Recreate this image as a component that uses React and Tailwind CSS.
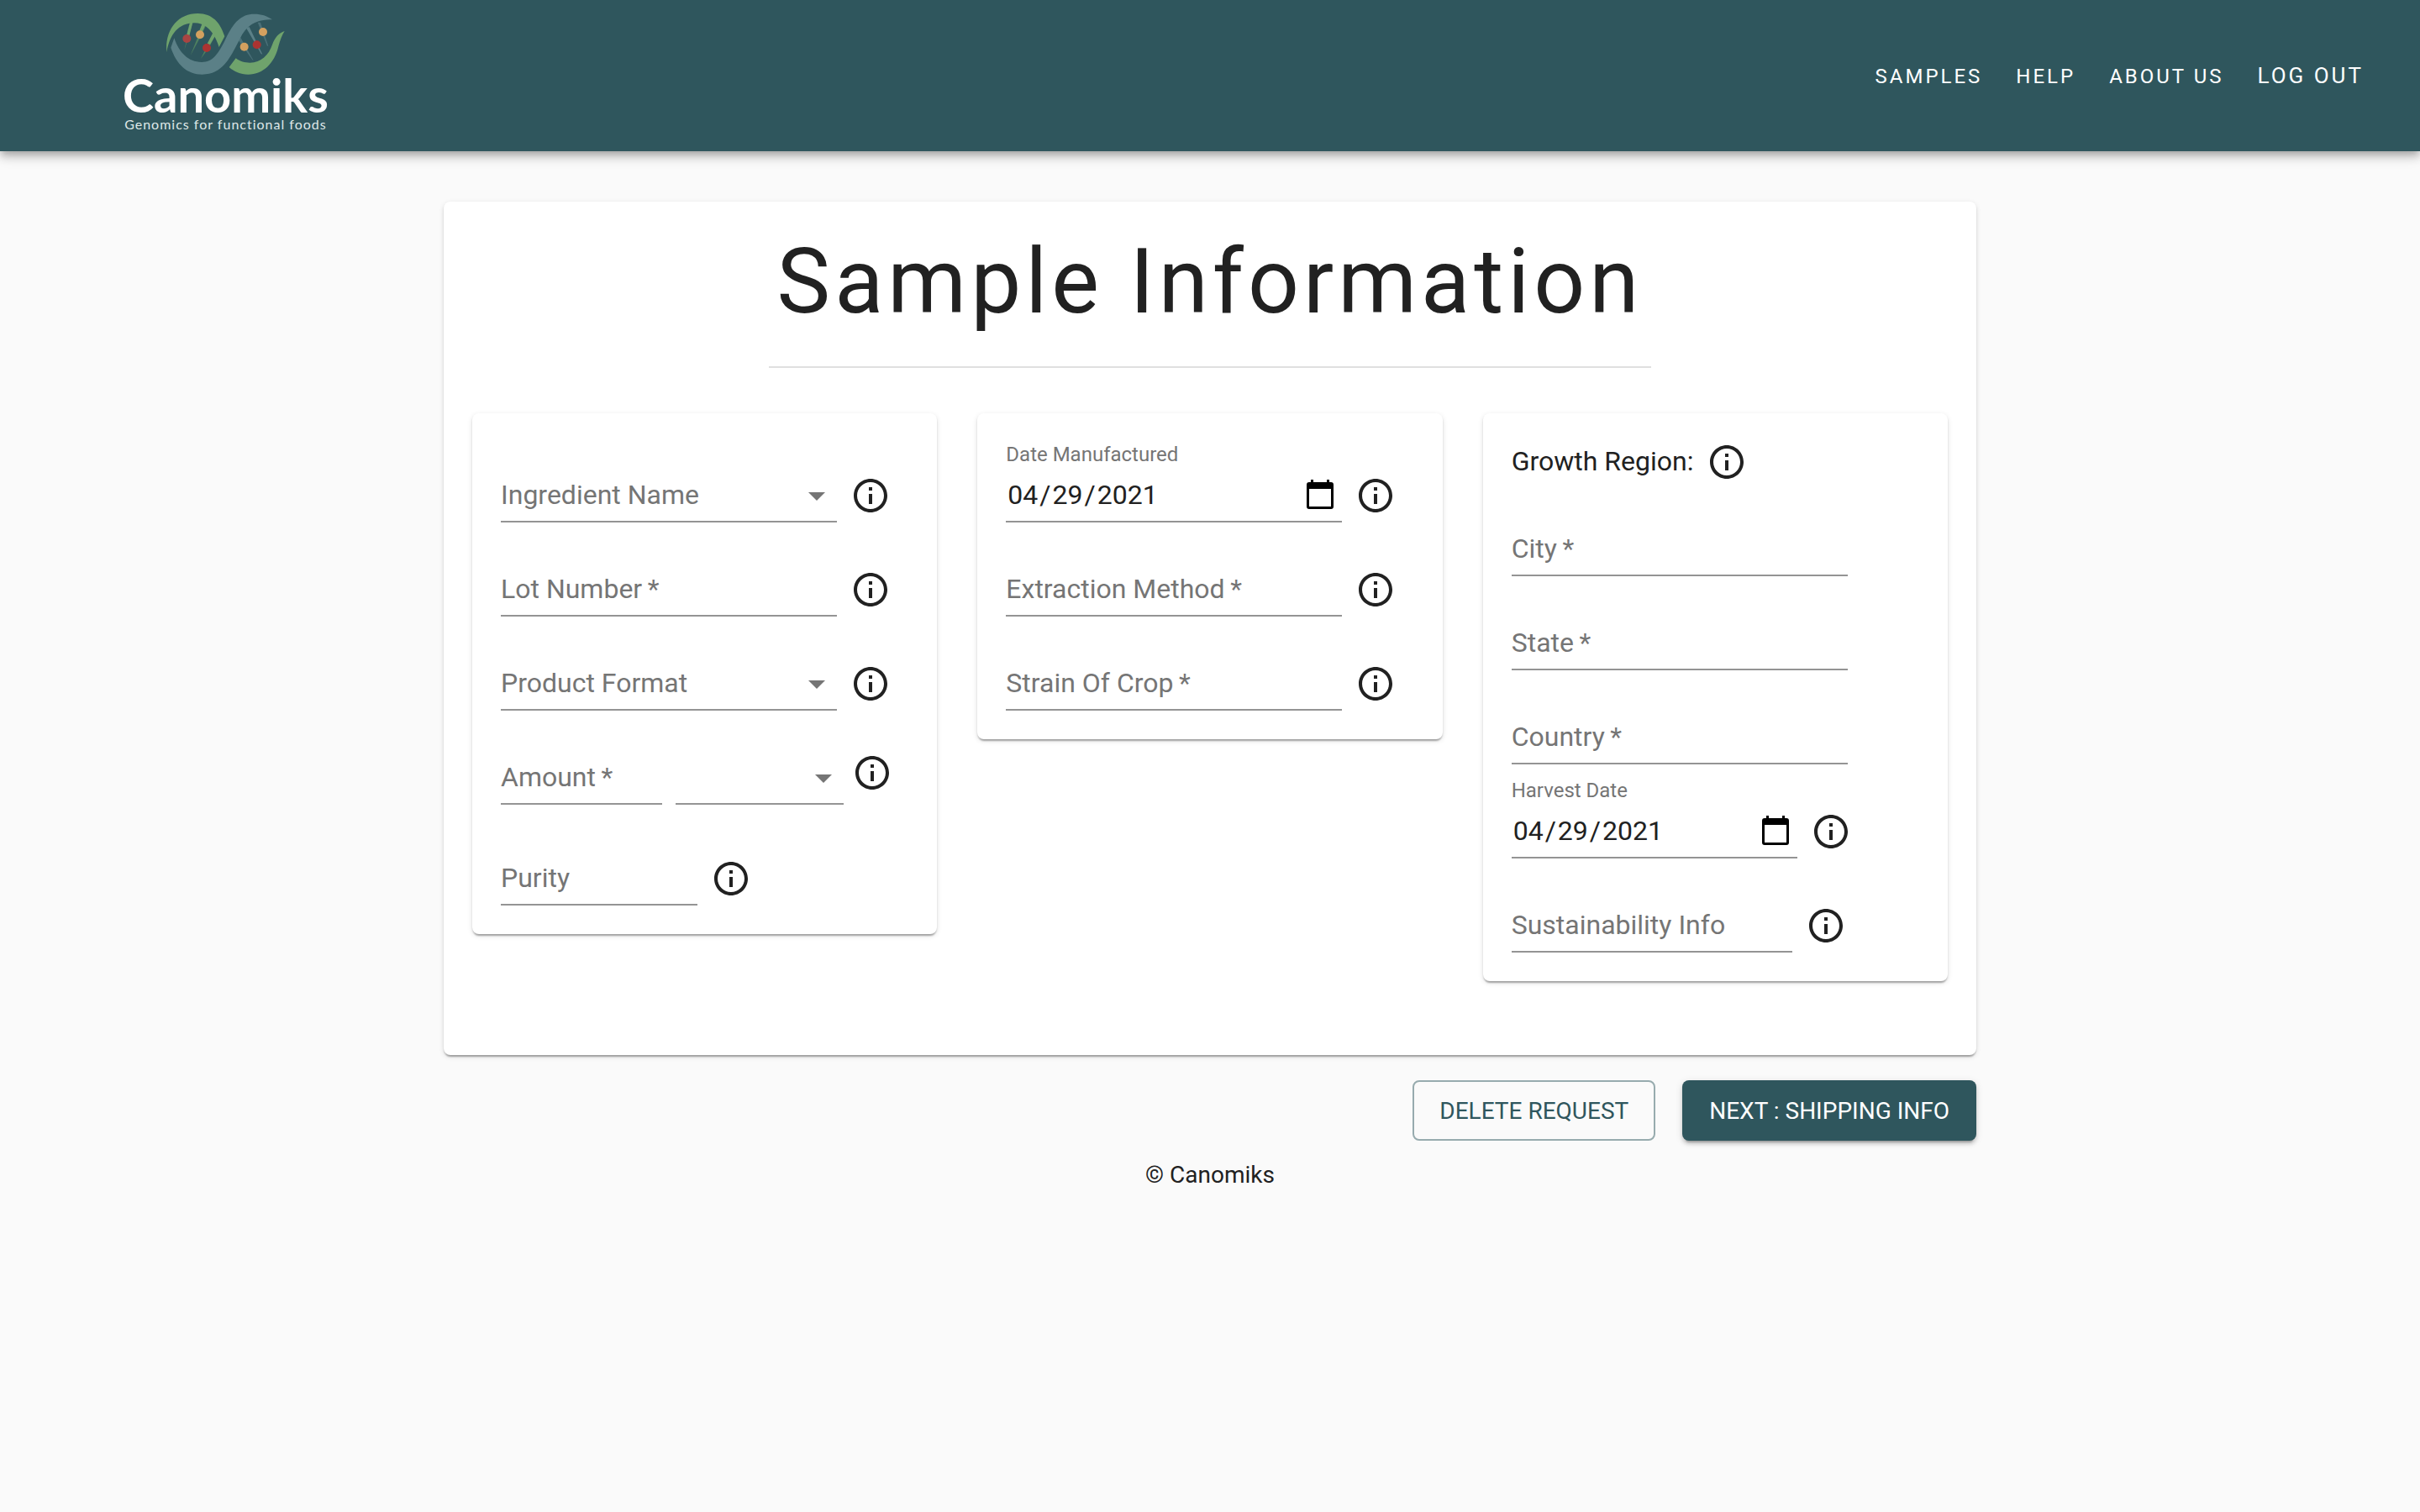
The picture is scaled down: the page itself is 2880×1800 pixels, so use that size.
import { useId } from 'react';

function LogoMark() {
  return (
    <svg viewBox="228 42 432 228" className="h-[76px] w-[144px] shrink-0" aria-hidden="true">
      <path d="M319 84 L327 84 L320 108 L298 180 Z" fill="#4f8160" />
      <path d="M363 90 L374 94 L360 124 L320 198 Z" fill="#4f8160" />
      <path d="M402 116 L410 124 L385 172 L357 210 Z" fill="#4f8160" />
      <path d="M318 80 L328 80 L316 128 L306 126 Z" fill="#6fa36c" />
      <path d="M362 84 L374 88 L360 118 L350 114 Z" fill="#6fa36c" />
      <path d="M402 114 L411 124 L390 158 L380 156 Z" fill="#6fa36c" />
      <path d="M560 80 L570 80 L598 164 L594 164 Z" fill="#4a7078" />
      <path d="M519 100 L530 96 L577 194 L572 192 Z" fill="#5b8087" />
      <path d="M490 142 L499 134 L545 216 L541 214 Z" fill="#4a7078" />
      <path
        d="M235 186 C228 110 272 48 346 48 C400 48 426 82 442 130 L422 168 C406 118 378 82 334 82 C276 82 246 124 235 186 Z"
        fill="#6fa36c"
      />
      <path
        d="M262 136 C278 186 312 222 360 222 C398 222 418 196 446 138 C474 80 500 50 548 50 C574 50 592 56 612 70 C562 70 526 84 500 132 C466 196 440 266 362 266 C308 266 270 230 250 170 Z"
        fill="#5b8087"
      />
      <path
        d="M482 208 C498 220 514 224 532 224 C572 224 600 196 612 160 C622 132 636 118 656 111 C648 124 640 142 634 166 C620 226 580 266 526 266 C498 266 476 256 458 240 Z"
        fill="#6fa36c"
      />
      <circle cx="307" cy="138" r="15" fill="#a94442" />
      <circle cx="354" cy="124" r="15" fill="#d3a05f" />
      <circle cx="378" cy="171" r="15" fill="#ac3331" />
      <circle cx="512" cy="167" r="15" fill="#d3a05f" />
      <circle cx="557" cy="160" r="15" fill="#ac3331" />
      <circle cx="579" cy="114" r="15" fill="#d3a05f" />
    </svg>
  );
}

function InfoButton({ label }) {
  return (
    <button type="button" aria-label={`About ${label}`} className="size-12 shrink-0 text-[#212121]">
      <svg viewBox="0 0 24 24" fill="currentColor" className="size-12">
        <path d="M11 7h2v2h-2zm0 4h2v6h-2zm1-9C6.48 2 2 6.48 2 12s4.48 10 10 10 10-4.48 10-10S17.52 2 12 2zm0 18c-4.41 0-8-3.59-8-8s3.59-8 8-8 8 3.59 8 8-3.59 8-8 8z" />
      </svg>
    </button>
  );
}

const control =
  'block h-16 w-full appearance-none border-b-2 border-[#949494] bg-transparent text-[32px] leading-[38px] text-[#212121] outline-none';

// Resting label that lies over an empty control; required fields get an asterisk.
function RestingLabel({ htmlFor, label, required }) {
  return (
    <label
      htmlFor={htmlFor}
      className="pointer-events-none absolute top-2 left-0 text-[32px] leading-[46px] whitespace-nowrap text-[#757575]"
    >
      {label}
      {required && '\u2009*'}
    </label>
  );
}

function TextField({ label, required, width = 'w-[400px]' }) {
  const id = useId();
  return (
    <div className={`pt-8 ${width}`}>
      <div className="relative">
        <input id={id} type="text" className={control} />
        <RestingLabel htmlFor={id} label={label} required={required} />
      </div>
    </div>
  );
}

function SelectField({ label, name, width = 'w-[400px]' }) {
  const id = useId();
  return (
    <div className={`pt-8 ${width}`}>
      <div className="relative">
        <select id={id} aria-label={name} className={`${control} pr-12`}>
          <option value=""></option>
        </select>
        {label && <RestingLabel htmlFor={id} label={label} />}
        <svg viewBox="0 0 24 24" fill="#757575" className="pointer-events-none absolute top-2 right-0 size-12" aria-hidden="true">
          <path d="M7 10l5 5 5-5z" />
        </svg>
      </div>
    </div>
  );
}

function DateField({ label, width = 'w-[400px]' }) {
  const id = useId();
  return (
    <div className={width}>
      <label htmlFor={id} className="block h-8 text-[24px] leading-[30px] text-[#757575]">{label}</label>
      <div className="relative">
        <input
          id={id}
          type="date"
          defaultValue="2021-04-29"
          className={`${control} [&::-webkit-datetime-edit-month-field]:px-[2px] [&::-webkit-datetime-edit-day-field]:px-[2px] [&::-webkit-datetime-edit-year-field]:px-[2px] [&::-webkit-calendar-picker-indicator]:size-10 [&::-webkit-calendar-picker-indicator]:opacity-0`}
        />
        <svg viewBox="0 0 32 36" className="pointer-events-none absolute top-3 right-[10px] h-9 w-8" aria-hidden="true">
          <path d="M5 1h3v3h16V1h3v3h2a3 3 0 0 1 3 3v26a3 3 0 0 1-3 3H3a3 3 0 0 1-3-3V7a3 3 0 0 1 3-3h2z M3 12v21h26V12z" fillRule="evenodd" />
        </svg>
      </div>
    </div>
  );
}

function Row({ info, children, align = 'pb-2' }) {
  return (
    <div className="flex items-end gap-4">
      {children}
      {info && <div className={`flex ${align}`}><InfoButton label={info} /></div>}
    </div>
  );
}

const paper = 'rounded-lg bg-white shadow-[0_4px_2px_-2px_rgba(0,0,0,0.2),0_2px_2px_0_rgba(0,0,0,0.14),0_2px_6px_0_rgba(0,0,0,0.12)]';

export default function App() {
  return (
    <div className="min-h-screen bg-[#fafafa] font-[Roboto,sans-serif] text-[#212121]">
      <header className="flex h-[180px] items-center justify-between bg-[#2f565d] pr-[67px] pl-[146px] shadow-[0_4px_8px_-2px_rgba(0,0,0,0.2),0_8px_10px_0_rgba(0,0,0,0.14),0_2px_20px_0_rgba(0,0,0,0.12)]">
        <a href="#home" className="flex h-full flex-col items-center pt-[14px] font-[Lato,sans-serif] text-white">
          <LogoMark />
          <span className="text-[56px] leading-[46px] font-bold">Canomiks</span>
          <span className="text-[16px] leading-[24px] tracking-[1px] text-[#dfe8e8]">Genomics for functional foods</span>
        </a>
        <nav className="flex items-baseline gap-10 text-[24px] leading-[32px] tracking-[3px] text-white">
          <a href="#samples">SAMPLES</a>
          <a href="#help">HELP</a>
          <a href="#about">ABOUT US</a>
          <button type="button" className="text-[26px] leading-[32px] tracking-[3px]">LOG OUT</button>
        </nav>
      </header>

      <main className="mx-auto max-w-[1824px] pt-[60px]">
        <form>
          <section className={`${paper} px-[34px] pb-[88px]`}>
            <div className="mx-auto mb-[54px] w-fit border-b-2 border-[#e0e0e0] px-[10px] pt-8 pb-[36px]">
              <h1 className="text-center text-[107px] leading-[128px] tracking-[5px]">Sample Information</h1>
            </div>
            <div className="grid grid-cols-3 items-start gap-12">
              <div className={`${paper} flex flex-col gap-4 p-[34px]`}>
                <Row info="Ingredient Name"><SelectField label="Ingredient Name" /></Row>
                <Row info="Lot Number"><TextField label="Lot Number" required /></Row>
                <Row info="Product Format"><SelectField label="Product Format" /></Row>
                <Row info="Amount" align="-ml-[6px] pb-[14px]">
                  <TextField label="Amount" required width="w-[192px]" />
                  <SelectField name="Amount unit" width="w-[200px]" />
                </Row>
                <div className="pt-2">
                  <Row info="Purity"><TextField label="Purity" width="w-[234px]" /></Row>
                </div>
              </div>

              <div className={`${paper} flex flex-col gap-4 p-[34px]`}>
                <Row info="Date Manufactured"><DateField label="Date Manufactured" /></Row>
                <Row info="Extraction Method"><TextField label="Extraction Method" required /></Row>
                <Row info="Strain Of Crop"><TextField label="Strain Of Crop" required /></Row>
              </div>

              <div className={`${paper} flex flex-col gap-4 p-[34px]`}>
                <div className="flex h-12 gap-4">
                  <h2 className="text-[32px] leading-[46px]">Growth Region:</h2>
                  <InfoButton label="Growth Region" />
                </div>
                <Row><TextField label="City" required /></Row>
                <Row><TextField label="State" required /></Row>
                <Row><TextField label="Country" required /></Row>
                <Row info="Harvest Date"><DateField label="Harvest Date" width="w-[340px]" /></Row>
                <Row info="Sustainability Info"><TextField label="Sustainability Info" width="w-[334px]" /></Row>
              </div>
            </div>
          </section>

          <div className="mt-[30px] flex justify-end gap-8 text-[28px] leading-[48px]">
            <button type="button" className="h-[72px] rounded-lg border-2 border-[#97abae] px-[30px] pt-[2px] text-[#2f565d]">
              DELETE REQUEST
            </button>
            <button type="submit" className="h-[72px] rounded-lg bg-[#2f565d] px-8 pt-[2px] text-white shadow-[0_6px_2px_-4px_rgba(0,0,0,0.2),0_4px_4px_0_rgba(0,0,0,0.14),0_2px_10px_0_rgba(0,0,0,0.12)]">
              NEXT : SHIPPING INFO
            </button>
          </div>
        </form>
      </main>

      <footer className="pt-[21px] text-center text-[28px] leading-[40px]">© Canomiks</footer>
    </div>
  );
}
